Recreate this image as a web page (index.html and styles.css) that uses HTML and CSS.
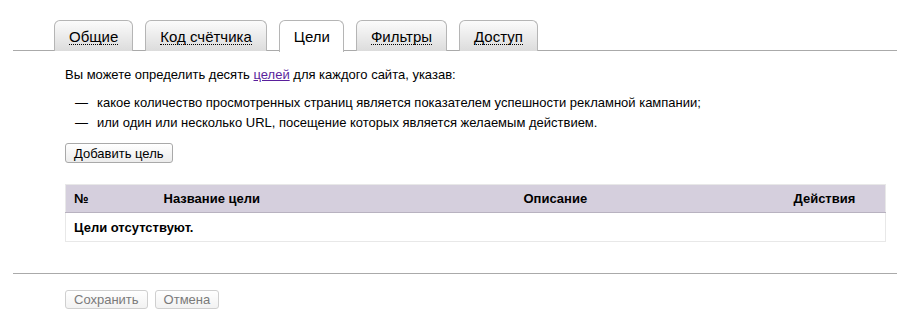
FILE: index.html
```html
<!DOCTYPE html>
<html lang="ru">
<head>
    <meta charset="UTF-8">
    <title>Цели</title>
    <link rel="stylesheet" href="styles.css">
</head>
<body>
    <div class="page">
        <div class="tabs">
            <div class="tab"><span>Общие</span></div>
            <div class="tab"><span>Код счётчика</span></div>
            <div class="tab active"><span>Цели</span></div>
            <div class="tab"><span>Фильтры</span></div>
            <div class="tab"><span>Доступ</span></div>
        </div>

        <div class="content">
            <p class="intro">Вы можете определить десять <a href="#">целей</a> для каждого сайта, указав:</p>
            <ul class="dash-list">
                <li>какое количество просмотренных страниц является показателем успешности рекламной кампании;</li>
                <li>или один или несколько URL, посещение которых является желаемым действием.</li>
            </ul>
            <button class="btn">Добавить цель</button>

            <table class="goals">
                <thead>
                    <tr>
                        <th class="col-num">№</th>
                        <th class="col-name">Название цели</th>
                        <th class="col-desc">Описание</th>
                        <th class="col-act">Действия</th>
                    </tr>
                </thead>
                <tbody>
                    <tr>
                        <td colspan="4">Цели отсутствуют.</td>
                    </tr>
                </tbody>
            </table>
        </div>

        <div class="footer">
            <button class="btn" disabled>Сохранить</button>
            <button class="btn" disabled>Отмена</button>
        </div>
    </div>
</body>
</html>
```

FILE: styles.css
```css
* {
    box-sizing: border-box;
    margin: 0;
    padding: 0;
}

body {
    background: #fff;
    font-family: "Liberation Sans", Arial, sans-serif;
    font-size: 13px;
    color: #000;
}

.page {
    padding: 20px 16px 0 13px;
}

.tabs {
    display: flex;
    gap: 12px;
    padding-left: 41px;
    border-bottom: 1px solid #aaa;
    height: 31px;
}

.tab {
    height: 31px;
    padding: 0 14px;
    border: 1px solid #b5b5b5;
    border-bottom: none;
    border-radius: 6px 6px 0 0;
    background: linear-gradient(#fbfbfb, #dcdcdc);
    font-size: 15px;
    display: flex;
    align-items: center;
    cursor: pointer;
}

.tab span {
    border-bottom: 1px dotted #000;
    line-height: 15px;
    padding-top: 2px;
}

.tab.active {
    background: #fff;
    height: 32px;
    padding: 0 13px 0 14px;
}

.tab.active span {
    border-bottom: none;
    padding-top: 0;
}

.content {
    padding: 16px 0 0 52px;
}

.intro {
    line-height: 16px;
}

.intro a {
    color: #5a1f9c;
}

.dash-list {
    list-style: none;
    margin-top: 10px;
    padding-left: 10px;
}

.dash-list li {
    line-height: 20px;
    padding-left: 22px;
    position: relative;
}

.dash-list li::before {
    content: "—";
    position: absolute;
    left: 0;
}

.btn {
    font-family: "Liberation Sans", Arial, sans-serif;
    font-size: 13px;
    color: #000;
    height: 20px;
    padding: 0 8px;
    border: 1px solid #a9a9a9;
    border-radius: 3px;
    background: linear-gradient(#fff, #ececec);
    margin-top: 10px;
}

.btn:disabled {
    color: #7a7a7a;
    border-color: #cfcfcf;
    background: linear-gradient(#fff, #f2f2f2);
    height: 19px;
    padding: 0 8px;
}

.goals {
    margin-top: 21px;
    width: 821px;
    border-collapse: collapse;
    border: 1px solid #e8e8e8;
}

.goals th {
    background: #d5cfdd;
    height: 28px;
    text-align: left;
    font-weight: bold;
    border-bottom: 1px solid #b8b2c0;
    padding: 0 0 0 8px;
}

.goals .col-num { width: 90px; }
.goals .col-name { width: 360px; }
.goals .col-desc { width: 270px; }

.goals td {
    height: 29px;
    font-weight: bold;
    padding: 0 8px;
}

.footer {
    margin-top: 31px;
    border-top: 1px solid #aaa;
    padding: 16px 0 0 52px;
    display: flex;
    gap: 7px;
}

.footer .btn {
    margin-top: 0;
}
```
